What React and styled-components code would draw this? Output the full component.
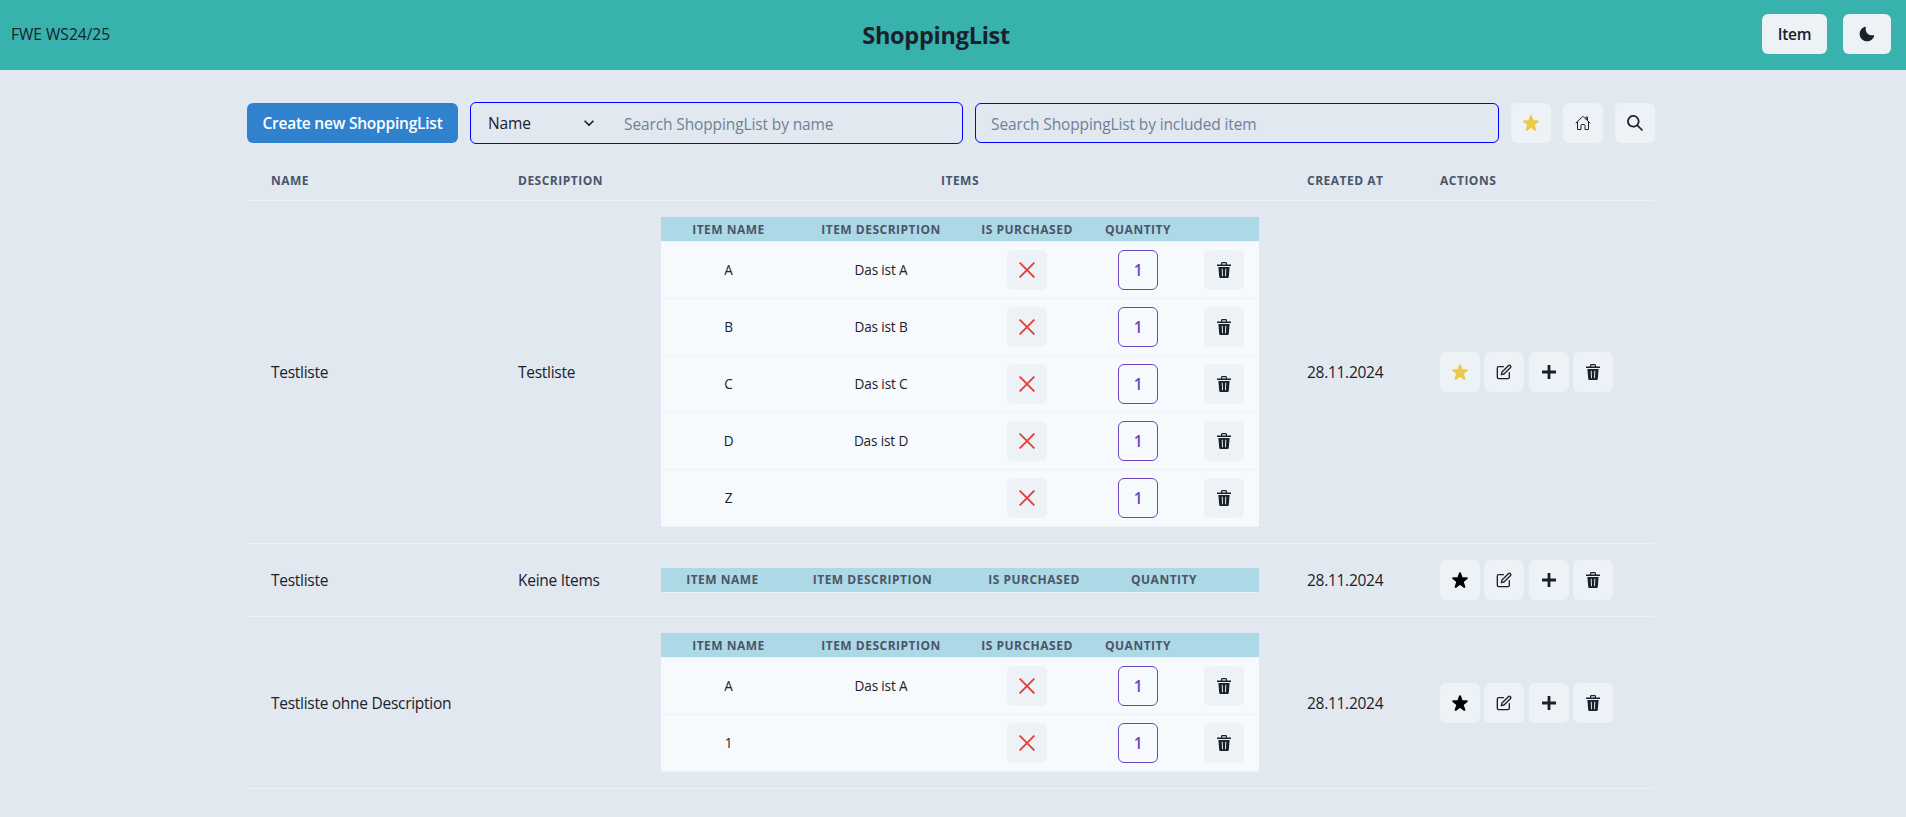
import React from "react";
import styled, { createGlobalStyle } from "styled-components";
import { IoHomeOutline } from "react-icons/io5";
import { FiEdit } from "react-icons/fi";

const GlobalStyle = createGlobalStyle`
  *, *::before, *::after { box-sizing: border-box; }
  html, body { margin: 0; padding: 0; }
  body {
    min-height: 100vh;
    background: #e2e8f0;
    color: #1a202c;
    font-family: "Segoe UI", "Open Sans", "Noto Sans", sans-serif;
    font-size: 15.5px;
    line-height: 24px;
    overflow: hidden;
  }
  button, input, select { font: inherit; color: inherit; margin: 0; }
`;

const Header = styled.header`
  display: flex;
  align-items: center;
  justify-content: space-between;
  height: 70px;
  padding: 0 15px 2px 11px;
  background: #38b2ac;
`;

const Course = styled.span`
  letter-spacing: 0.02px;
`;

const Title = styled.h1`
  margin: 0;
  padding-top: 2px;
  font-size: 23.5px;
  font-weight: 700;
  line-height: 32px;
  letter-spacing: -0.27px;
`;

const HeaderActions = styled.div`
  display: flex;
  gap: 16px;
`;

const Button = styled.button`
  display: inline-flex;
  align-items: center;
  justify-content: center;
  flex: none;
  width: ${(p) => p.$width || 40}px;
  height: 40px;
  padding: 0;
  border: ${(p) => (p.$outline ? `1px solid ${p.$outline}` : "0")};
  border-radius: 6px;
  background: ${(p) => p.$bg || "#edf2f7"};
  color: ${(p) => p.$color || "#1a202c"};
  font-size: 15.5px;
  font-weight: 600;
  letter-spacing: -0.22px;
  white-space: nowrap;

  svg {
    display: block;
    width: 16px;
    height: 16px;
  }
`;

const Main = styled.main`
  width: 1412px;
  margin: 0 auto;
  padding: 32px 4px 0 0;
`;

const Toolbar = styled.div`
  display: flex;
  align-items: center;
  gap: 12px;
  height: 42px;
  margin-bottom: 16px;
`;

const SearchGroup = styled.div`
  display: flex;
  align-items: center;
  width: 493px;
  height: 42px;
  border: 1px solid #0000ff;
  border-radius: 6px;
`;

const SelectWrap = styled.div`
  display: flex;
  align-items: center;
  width: 138px;
  height: 40px;
  padding-right: 10px;

  svg {
    flex: none;
    width: 20px;
    height: 20px;
  }
`;

const Select = styled.select`
  flex: 1;
  min-width: 0;
  height: 40px;
  padding: 0 0 0 17px;
  border: 0;
  background: transparent;
  appearance: none;
  letter-spacing: -0.1px;
`;

const Input = styled.input`
  flex: 1;
  min-width: 0;
  height: 40px;
  padding: 2px 16px 0 15px;
  border: ${(p) => (p.$bordered ? "1px solid #0000ff" : "0")};
  border-radius: 6px;
  background: transparent;
  letter-spacing: -0.12px;

  &::placeholder { color: #718096; opacity: 1; }
`;

const ListTable = styled.table`
  width: 100%;
  border-collapse: separate;
  border-spacing: 0;
  table-layout: fixed;
`;

const Th = styled.th`
  height: 41px;
  padding: 2px 24px 0;
  border-bottom: 1px solid #edf2f7;
  color: #4a5568;
  font-size: 12px;
  font-weight: 700;
  line-height: 16px;
  letter-spacing: 0.5px;
  text-align: ${(p) => p.$align || "left"};
  text-transform: uppercase;
`;

const Td = styled.td`
  padding: 16px 24px;
  border-bottom: 1px solid #edf2f7;
  letter-spacing: -0.28px;
  vertical-align: middle;
  white-space: nowrap;
`;

const ItemTable = styled.table`
  width: 598px;
  border-collapse: separate;
  border-spacing: 0;
  table-layout: fixed;
  background: #f7fafc;
  font-size: 13.6px;
  line-height: 20px;
`;

const ItemTh = styled(Th)`
  height: 25px;
  padding: 1px 0 0;
  background: #add8e6;
  background-clip: padding-box;
  text-align: center;
`;

const ItemTd = styled.td`
  height: 57px;
  padding: 8px 0;
  border-bottom: 1px solid #edf2f7;
  letter-spacing: -0.15px;
  text-align: center;
  vertical-align: middle;

  ${Button} { vertical-align: top; }
`;

const Actions = styled.div`
  display: flex;
  gap: 4.4px;
`;

const MoonIcon = () => (
  <svg viewBox="0 0 24 24" fill="currentColor">
    <path d="M21.4,13.7C20.6,13.9,19.8,14,19,14c-5,0-9-4-9-9c0-0.8,0.1-1.6,0.3-2.4c0.1-0.3,0-0.7-0.3-1c-0.3-0.3-0.6-0.4-1-0.3C4.3,2.7,1,7.1,1,12c0,6.1,4.9,11,11,11c4.9,0,9.3-3.3,10.6-8.1c0.1-0.3,0-0.7-0.3-1C22.1,13.7,21.7,13.6,21.4,13.7z" />
  </svg>
);

const StarIcon = () => (
  <svg viewBox="0 0 24 24" fill="currentColor">
    <path d="M23.555,8.729a1.505,1.505,0,0,0-1.406-.98H16.062a.5.5,0,0,1-.472-.334L13.405,1.222a1.5,1.5,0,0,0-2.81,0l-.005.016L8.41,7.415a.5.5,0,0,1-.471.334H1.85A1.5,1.5,0,0,0,.887,10.4l5.184,4.3a.5.5,0,0,1,.155.543L4.048,21.774a1.5,1.5,0,0,0,2.31,1.684l5.346-3.92a.5.5,0,0,1,.591,0l5.344,3.919a1.5,1.5,0,0,0,2.312-1.683l-2.178-6.535a.5.5,0,0,1,.155-.543l5.194-4.306A1.5,1.5,0,0,0,23.555,8.729Z" />
  </svg>
);

const SearchIcon = () => (
  <svg viewBox="0 0 24 24" fill="currentColor">
    <path d="M23.384,21.619,16.855,15.09a9.284,9.284,0,1,0-1.768,1.768l6.529,6.529a1.266,1.266,0,0,0,1.768,0A1.251,1.251,0,0,0,23.384,21.619ZM2.75,9.5a6.75,6.75,0,1,1,6.75,6.75A6.758,6.758,0,0,1,2.75,9.5Z" />
  </svg>
);

const ChevronIcon = () => (
  <svg viewBox="0 0 24 24" fill="currentColor">
    <path d="M16.59 8.59L12 13.17 7.41 8.59 6 10l6 6 6-6z" />
  </svg>
);

const PlusIcon = () => (
  <svg viewBox="0 0 16 16" fill="currentColor">
    <path d="M6.6 1h2.8v5.6H15v2.8H9.4V15H6.6V9.4H1V6.6h5.6z" />
  </svg>
);

const CrossIcon = () => (
  <svg viewBox="0 0 16 16" fill="none" stroke="currentColor" strokeWidth="1.9">
    <path d="M0.6 0.6l14.8 14.8M15.4 0.6L0.6 15.4" />
  </svg>
);

const TrashIcon = () => (
  <svg viewBox="0 0 16 16" fill="currentColor" fillRule="evenodd">
    <path d="M5 2.5V1.4Q5 0 6.4 0h3.2Q11 0 11 1.4v1.1h4V4H1V2.5zM6.2 2.5h3.6V1.2H6.2z" />
    <path d="M2.4 5h11.2l-.8 9.8q-.1 1.2-1.3 1.2h-7q-1.200 0-1.300-1.200zM5.700 6.800l.4 7.400h.9l-.3-7.400zM9.300 6.800l-.3 7.400h.9l.4-7.400z" />
  </svg>
);

const LISTS = [
  {
    name: "Testliste",
    description: "Testliste",
    favorite: true,
    items: [
      ["A", "Das ist A"],
      ["B", "Das ist B"],
      ["C", "Das ist C"],
      ["D", "Das ist D"],
      ["Z", ""],
    ],
  },
  { name: "Testliste", description: "Keine Items", items: [] },
  {
    name: "Testliste ohne Description",
    description: "",
    items: [
      ["A", "Das ist A"],
      ["1", ""],
    ],
  },
];

const LIST_COLUMNS = [247, 143, 646, 133, 239];
const FILLED_COLUMNS = [135, 170, 122, 100, 71];
const EMPTY_COLUMNS = [123, 177, 146, 114, 38];

const Columns = ({ widths }) => (
  <colgroup>
    {widths.map((w, i) => (
      <col key={i} width={w} />
    ))}
  </colgroup>
);

const Items = ({ items }) => (
  <ItemTable>
    <Columns widths={items.length ? FILLED_COLUMNS : EMPTY_COLUMNS} />
    <thead>
      <tr>
        <ItemTh>Item Name</ItemTh>
        <ItemTh>Item Description</ItemTh>
        <ItemTh>Is Purchased</ItemTh>
        <ItemTh>Quantity</ItemTh>
        <ItemTh />
      </tr>
    </thead>
    <tbody>
      {items.map(([name, description]) => (
        <tr key={name}>
          <ItemTd>{name}</ItemTd>
          <ItemTd>{description}</ItemTd>
          <ItemTd>
            <Button $color="#e53e3e" aria-label="Toggle purchased">
              <CrossIcon />
            </Button>
          </ItemTd>
          <ItemTd>
            <Button $bg="transparent" $color="#6b46c1" $outline="#6b46c1">1</Button>
          </ItemTd>
          <ItemTd>
            <Button aria-label="Remove item"><TrashIcon /></Button>
          </ItemTd>
        </tr>
      ))}
    </tbody>
  </ItemTable>
);

export default function App() {
  return (
    <>
      <GlobalStyle />
      <Header>
        <Course>FWE WS24/25</Course>
        <Title>ShoppingList</Title>
        <HeaderActions>
          <Button $width={65}>Item</Button>
          <Button $width={48} aria-label="Toggle color mode"><MoonIcon /></Button>
        </HeaderActions>
      </Header>
      <Main>
        <Toolbar>
          <Button $width={211} $bg="#3182ce" $color="#fff">Create new ShoppingList</Button>
          <SearchGroup>
            <SelectWrap>
              <Select defaultValue="Name">
                <option>Name</option>
              </Select>
              <ChevronIcon />
            </SelectWrap>
            <Input placeholder="Search ShoppingList by name" />
          </SearchGroup>
          <Input $bordered placeholder="Search ShoppingList by included item" />
          <Button $color="#ecc94b" aria-label="Favorites"><StarIcon /></Button>
          <Button aria-label="Home"><IoHomeOutline /></Button>
          <Button aria-label="Search"><SearchIcon /></Button>
        </Toolbar>
        <ListTable>
          <Columns widths={LIST_COLUMNS} />
          <thead>
            <tr>
              <Th>Name</Th>
              <Th>Description</Th>
              <Th $align="center">Items</Th>
              <Th>Created at</Th>
              <Th>Actions</Th>
            </tr>
          </thead>
          <tbody>
            {LISTS.map((list, i) => (
              <tr key={i}>
                <Td>{list.name}</Td>
                <Td>{list.description}</Td>
                <Td><Items items={list.items} /></Td>
                <Td>28.11.2024</Td>
                <Td>
                  <Actions>
                    <Button $color={list.favorite ? "#ecc94b" : "#000"} aria-label="Favorite"><StarIcon /></Button>
                    <Button aria-label="Edit"><FiEdit /></Button>
                    <Button aria-label="Add item"><PlusIcon /></Button>
                    <Button aria-label="Delete"><TrashIcon /></Button>
                  </Actions>
                </Td>
              </tr>
            ))}
          </tbody>
        </ListTable>
      </Main>
    </>
  );
}
